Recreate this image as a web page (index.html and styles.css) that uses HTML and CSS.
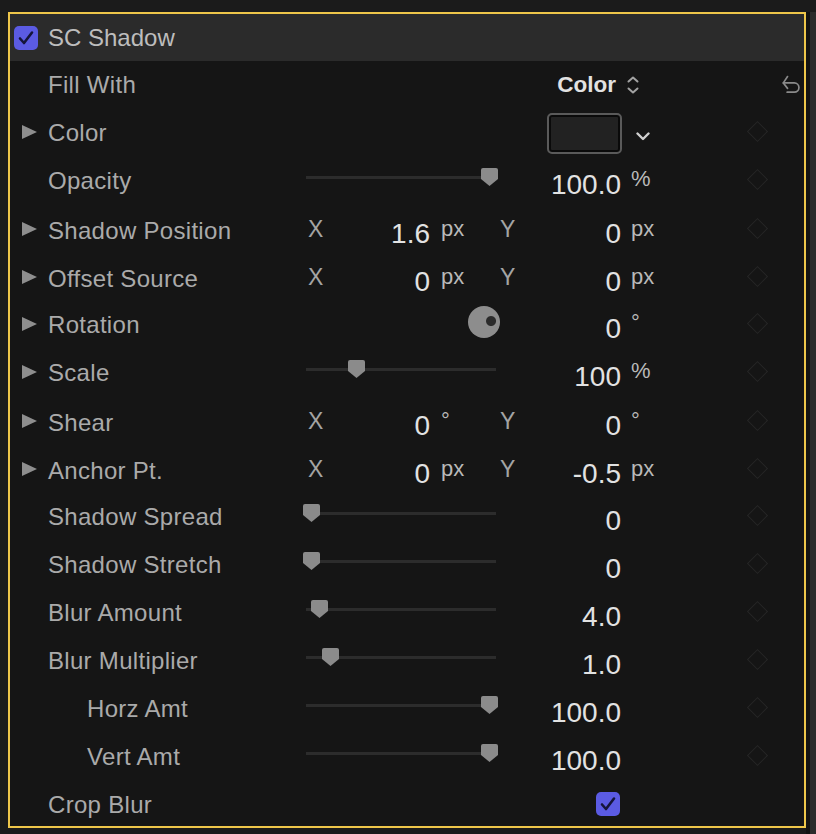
FILE: index.html
```html
<!DOCTYPE html>
<html lang="en">
<head>
    <meta charset="UTF-8">
    <title>SC Shadow</title>
    <link rel="stylesheet" href="styles.css">
</head>
<body>
    <div class="panel">
        <div class="head">
            <span class="check">
                <svg width="24" height="24" viewBox="0 0 24 24"><polyline points="6,12.5 10,17 18,6.5" /></svg>
            </span>
            <span class="head-title">SC Shadow</span>
        </div>

        <div class="row">
            <div class="c-label">Fill With</div>
            <div class="c-value"><span class="popup">Color</span></div>
            <div class="c-unit">
                <svg class="updown" width="12" height="18" viewBox="0 0 12 18"><polyline points="1.5,5.5 6,1.5 10.5,5.5" /><polyline points="1.5,12.5 6,16.5 10.5,12.5" /></svg>
            </div>
            <div class="c-reset">
                <svg class="reset" width="32" height="32" viewBox="0 0 32 32"><polyline points="12.5,6 7.5,13.5 12.5,20" /><path d="M7.5 13.5 H20.5 A5.5 5.5 0 0 1 20.5 24.5 H12" /></svg>
            </div>
        </div>

        <div class="row">
            <div class="c-icon"><i class="twisty"></i></div>
            <div class="c-label">Color</div>
            <div class="c-value"><span class="swatch"></span></div>
            <div class="c-unit">
                <svg class="drop" width="14" height="9" viewBox="0 0 14 9"><polyline points="1.5,1.5 7,7 12.5,1.5" /></svg>
            </div>
            <div class="c-key"><i class="key"></i></div>
        </div>

        <div class="row">
            <div class="c-label">Opacity</div>
            <div class="c-ctrl"><div class="slider"><span class="track"></span><svg class="thumb" style="left: 175px" width="17" height="18" viewBox="0 0 17 18"><path d="M2 0 H15 Q17 0 17 2 V11 L8.5 18 L0 11 V2 Q0 0 2 0 Z" /></svg></div></div>
            <div class="c-value"><span class="num">100.0</span></div>
            <div class="c-unit"><span class="unit">%</span></div>
            <div class="c-key"><i class="key"></i></div>
        </div>

        <div class="row">
            <div class="c-icon"><i class="twisty"></i></div>
            <div class="c-label">Shadow Position</div>
            <div class="c-ctrl xy"><span class="axis">X</span><span class="xnum"><span class="num">1.6</span></span><span class="xunit"><span class="unit">px</span></span></div>
            <div class="c-value ypair"><span class="axis">Y</span><span class="num">0</span></div>
            <div class="c-unit"><span class="unit">px</span></div>
            <div class="c-key"><i class="key"></i></div>
        </div>

        <div class="row">
            <div class="c-icon"><i class="twisty"></i></div>
            <div class="c-label">Offset Source</div>
            <div class="c-ctrl xy"><span class="axis">X</span><span class="xnum"><span class="num">0</span></span><span class="xunit"><span class="unit">px</span></span></div>
            <div class="c-value ypair"><span class="axis">Y</span><span class="num">0</span></div>
            <div class="c-unit"><span class="unit">px</span></div>
            <div class="c-key"><i class="key"></i></div>
        </div>

        <div class="row">
            <div class="c-icon"><i class="twisty"></i></div>
            <div class="c-label">Rotation</div>
            <div class="c-ctrl dial-cell"><span class="dial"></span></div>
            <div class="c-value"><span class="num">0</span></div>
            <div class="c-unit"><span class="unit">°</span></div>
            <div class="c-key"><i class="key"></i></div>
        </div>

        <div class="row">
            <div class="c-icon"><i class="twisty"></i></div>
            <div class="c-label">Scale</div>
            <div class="c-ctrl"><div class="slider"><span class="track"></span><svg class="thumb" style="left: 42px" width="17" height="18" viewBox="0 0 17 18"><path d="M2 0 H15 Q17 0 17 2 V11 L8.5 18 L0 11 V2 Q0 0 2 0 Z" /></svg></div></div>
            <div class="c-value"><span class="num">100</span></div>
            <div class="c-unit"><span class="unit">%</span></div>
            <div class="c-key"><i class="key"></i></div>
        </div>

        <div class="row">
            <div class="c-icon"><i class="twisty"></i></div>
            <div class="c-label">Shear</div>
            <div class="c-ctrl xy"><span class="axis">X</span><span class="xnum"><span class="num">0</span></span><span class="xunit"><span class="unit">°</span></span></div>
            <div class="c-value ypair"><span class="axis">Y</span><span class="num">0</span></div>
            <div class="c-unit"><span class="unit">°</span></div>
            <div class="c-key"><i class="key"></i></div>
        </div>

        <div class="row">
            <div class="c-icon"><i class="twisty"></i></div>
            <div class="c-label">Anchor Pt.</div>
            <div class="c-ctrl xy"><span class="axis">X</span><span class="xnum"><span class="num">0</span></span><span class="xunit"><span class="unit">px</span></span></div>
            <div class="c-value ypair"><span class="axis">Y</span><span class="num">-0.5</span></div>
            <div class="c-unit"><span class="unit">px</span></div>
            <div class="c-key"><i class="key"></i></div>
        </div>

        <div class="row">
            <div class="c-label">Shadow Spread</div>
            <div class="c-ctrl"><div class="slider"><span class="track"></span><svg class="thumb" style="left: -3px" width="17" height="18" viewBox="0 0 17 18"><path d="M2 0 H15 Q17 0 17 2 V11 L8.5 18 L0 11 V2 Q0 0 2 0 Z" /></svg></div></div>
            <div class="c-value"><span class="num">0</span></div>
            <div class="c-key"><i class="key"></i></div>
        </div>

        <div class="row">
            <div class="c-label">Shadow Stretch</div>
            <div class="c-ctrl"><div class="slider"><span class="track"></span><svg class="thumb" style="left: -3px" width="17" height="18" viewBox="0 0 17 18"><path d="M2 0 H15 Q17 0 17 2 V11 L8.5 18 L0 11 V2 Q0 0 2 0 Z" /></svg></div></div>
            <div class="c-value"><span class="num">0</span></div>
            <div class="c-key"><i class="key"></i></div>
        </div>

        <div class="row">
            <div class="c-label">Blur Amount</div>
            <div class="c-ctrl"><div class="slider"><span class="track"></span><svg class="thumb" style="left: 5px" width="17" height="18" viewBox="0 0 17 18"><path d="M2 0 H15 Q17 0 17 2 V11 L8.5 18 L0 11 V2 Q0 0 2 0 Z" /></svg></div></div>
            <div class="c-value"><span class="num">4.0</span></div>
            <div class="c-key"><i class="key"></i></div>
        </div>

        <div class="row">
            <div class="c-label">Blur Multiplier</div>
            <div class="c-ctrl"><div class="slider"><span class="track"></span><svg class="thumb" style="left: 16px" width="17" height="18" viewBox="0 0 17 18"><path d="M2 0 H15 Q17 0 17 2 V11 L8.5 18 L0 11 V2 Q0 0 2 0 Z" /></svg></div></div>
            <div class="c-value"><span class="num">1.0</span></div>
            <div class="c-key"><i class="key"></i></div>
        </div>

        <div class="row">
            <div class="c-label sub">Horz Amt</div>
            <div class="c-ctrl"><div class="slider"><span class="track"></span><svg class="thumb" style="left: 175px" width="17" height="18" viewBox="0 0 17 18"><path d="M2 0 H15 Q17 0 17 2 V11 L8.5 18 L0 11 V2 Q0 0 2 0 Z" /></svg></div></div>
            <div class="c-value"><span class="num">100.0</span></div>
            <div class="c-key"><i class="key"></i></div>
        </div>

        <div class="row">
            <div class="c-label sub">Vert Amt</div>
            <div class="c-ctrl"><div class="slider"><span class="track"></span><svg class="thumb" style="left: 175px" width="17" height="18" viewBox="0 0 17 18"><path d="M2 0 H15 Q17 0 17 2 V11 L8.5 18 L0 11 V2 Q0 0 2 0 Z" /></svg></div></div>
            <div class="c-value"><span class="num">100.0</span></div>
            <div class="c-key"><i class="key"></i></div>
        </div>

        <div class="row">
            <div class="c-label">Crop Blur</div>
            <div class="c-value">
                <span class="check small">
                    <svg width="24" height="24" viewBox="0 0 24 24"><polyline points="6,12.5 10,17 18,6.5" /></svg>
                </span>
            </div>
        </div>
    </div>
    <div class="edge"></div>
</body>
</html>
```

FILE: styles.css
```css
/* Base */
* {
    margin: 0;
    padding: 0;
    box-sizing: border-box;
}
body {
    font-family: "Liberation Sans", Arial, sans-serif;
    background-color: #1b1b1b;
    display: flex;
    padding: 12px 0 0 8px;
    height: 834px;
    overflow: hidden;
}
/* Inspector panel with the yellow selection frame */
.panel {
    width: 798px;
    height: 816px;
    border: 2px solid #eec64a;
    background-color: #151515;
    overflow: hidden;
    flex-shrink: 0;
}
.edge {
    width: 10px;
    border-left: 4px solid #131313;
    background-color: #2b2b2b;
}
/* Header */
.head {
    height: 47px;
    background-color: #2b2b2b;
    display: flex;
    align-items: center;
    gap: 10px;
    padding-left: 4px;
}
.head-title {
    font-size: 24px;
    line-height: 1;
    color: #bdbdbd;
}
.check {
    width: 24px;
    height: 24px;
    border-radius: 5px;
    background-color: #5b5be3;
    display: flex;
}
.check svg polyline {
    fill: none;
    stroke: #15153a;
    stroke-width: 2.6;
    stroke-linecap: round;
    stroke-linejoin: round;
}
.check.small {
    margin-right: 1px;
    margin-top: -2px;
}
/* Parameter rows */
.row {
    display: grid;
    grid-template-columns: 38px 258px 190px 125px 119px 34px 30px;
    height: 48px;
}
.row > div {
    display: flex;
    align-items: center;
    grid-row: 1;
}
.c-icon { grid-column: 1; }
.c-label {
    grid-column: 2;
    font-size: 24px;
    line-height: 1;
    letter-spacing: 0.3px;
    color: #aaaaaa;
    white-space: nowrap;
}
.c-label.sub {
    padding-left: 39px;
}
.c-ctrl { grid-column: 3; }
.c-value {
    grid-column: 4;
    justify-content: flex-end;
}
.c-unit {
    grid-column: 5;
    padding-left: 10px;
}
.c-key {
    grid-column: 6;
    justify-content: center;
}
.c-reset { grid-column: 7; }
.twisty {
    width: 0;
    height: 0;
    margin-left: 12px;
    margin-bottom: 3px;
    border-left: 15px solid #8e8e8e;
    border-top: 7.5px solid transparent;
    border-bottom: 7.5px solid transparent;
}
.num {
    font-size: 28px;
    line-height: 1;
    color: #e2e2e2;
    margin-top: 7px;
    white-space: nowrap;
}
.unit {
    font-size: 22px;
    line-height: 1;
    color: #b9b9b9;
    margin-bottom: 4px;
}
.axis {
    font-size: 23px;
    line-height: 1;
    color: #a4a4a4;
    margin-bottom: 3px;
}
/* X / Y pairs */
.xy {
    display: grid !important;
    grid-template-columns: auto 1fr 66px;
    padding-left: 2px;
}
.xy > span {
    display: flex;
    align-items: center;
    height: 48px;
}
.xnum {
    justify-content: flex-end;
}
.xunit {
    padding-left: 11px;
}
.ypair {
    justify-content: space-between !important;
    padding-left: 4px;
}
/* Slider */
.slider {
    position: relative;
    width: 190px;
    height: 18px;
    margin-bottom: 8px;
}
.track {
    position: absolute;
    left: 0;
    right: 0;
    top: 8px;
    height: 3px;
    background-color: #2c2c2c;
}
.thumb {
    position: absolute;
    top: 0;
}
.thumb path {
    fill: #8b8b8b;
}
/* Rotation dial */
.dial-cell {
    justify-content: flex-end;
}
.dial {
    width: 32px;
    height: 32px;
    border-radius: 50%;
    margin-right: -4px;
    margin-bottom: 6px;
    background: radial-gradient(circle at 72% 47%, #2b2b2b 4.5px, #8d8d8d 5.5px);
}
/* Keyframe diamond */
.key {
    width: 15px;
    height: 15px;
    border: 1.5px solid #262626;
    transform: rotate(45deg);
    margin-bottom: 4px;
}
/* Fill With popup */
.popup {
    font-size: 22.5px;
    font-weight: 700;
    line-height: 1;
    color: #e2e2e2;
    padding-right: 5px;
}
.updown {
    margin-left: -4px;
}
.updown polyline,
.drop polyline,
.reset polyline,
.reset path {
    fill: none;
    stroke-width: 2;
    stroke-linecap: round;
    stroke-linejoin: round;
}
.updown polyline {
    stroke: #a2a2a2;
}
.drop {
    margin-left: 5px;
    margin-top: 6px;
}
.drop polyline {
    stroke: #cfcfcf;
    stroke-width: 2.4;
}
.reset {
    margin-left: 3px;
    margin-bottom: 1px;
}
.reset polyline,
.reset path {
    stroke: #8a8a8a;
}
/* Colour well */
.swatch {
    width: 75px;
    height: 41px;
    margin-right: -1px;
    border: 2px solid #5a5a5a;
    border-radius: 5px;
    background-color: #222222;
    box-shadow: inset 0 0 0 2px #0a0a0a;
}
```
